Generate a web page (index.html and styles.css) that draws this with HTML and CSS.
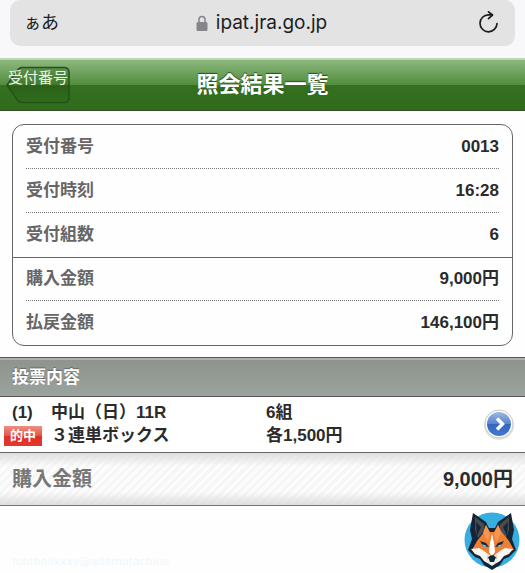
FILE: index.html
```
<!DOCTYPE html>
<html lang="ja">
<head>
    <meta charset="UTF-8">
    <meta name="viewport" content="width=device-width, initial-scale=1.0">
    <title>照会結果一覧</title>
    <link rel="stylesheet" href="styles.css">
</head>
<body>

<div class="browser-bar">
    <div class="address">
        <button type="button" class="text-size"><span class="small">ぁ</span>あ</button>
        <div class="url">
            <svg class="lock" width="12" height="17" viewBox="0 0 12 17" aria-hidden="true">
                <path d="M3 8V4.500a3 3 0 0 1 6 0V8" fill="none" stroke="#85858a" stroke-width="1.500"/>
                <rect x="0.500" y="7" width="11" height="9" rx="1.500" fill="#85858a"/>
            </svg>
            <span>ipat.jra.go.jp</span>
        </div>
        <button type="button" class="reload" aria-label="再読み込み">
            <svg width="20" height="24" viewBox="0 0 20 24" fill="none" stroke="#1c1c1e" stroke-width="1.700" stroke-linecap="round" stroke-linejoin="round">
                <path d="M18 12.500a8.500 8.500 0 1 1-8.500-8.700h3.500"/>
                <path d="M9.500 0.800l4 3.200-4 3.600"/>
            </svg>
        </button>
    </div>
</div>

<header class="header">
    <a href="#" class="back">
        <svg class="back-shape" width="64" height="38" viewBox="0 0 64 38" aria-hidden="true">
            <defs>
                <linearGradient id="backFill" x1="0" y1="0" x2="0" y2="1">
                    <stop offset="0" stop-color="#5b914c"/>
                    <stop offset="0.480" stop-color="#417c2e"/>
                    <stop offset="0.520" stop-color="#2a6119"/>
                    <stop offset="1" stop-color="#2f6d1c"/>
                </linearGradient>
            </defs>
            <path d="M16 1.500h42q5 0 5 5v25q0 5-5 5H16q-3 0-5-3L1 19 11 5q2-3.500 5-3.500z" fill="url(#backFill)" stroke="#28501c" stroke-width="1.500"/>
        </svg>
        <span class="back-text">受付番号</span>
    </a>
    <h1>照会結果一覧</h1>
</header>

<main>
    <dl class="summary">
        <div class="row"><dt>受付番号</dt><dd>0013</dd></div>
        <div class="row"><dt>受付時刻</dt><dd>16:28</dd></div>
        <div class="row"><dt>受付組数</dt><dd>6</dd></div>
        <div class="row divider"><dt>購入金額</dt><dd>9,000円</dd></div>
        <div class="row"><dt>払戻金額</dt><dd>146,100円</dd></div>
    </dl>

    <h2>投票内容</h2>

    <a href="#" class="bet">
        <span class="number">(1)</span>
        <span>中山（日）11R</span>
        <span>6組</span>
        <span class="hit">的中</span>
        <span>３連単ボックス</span>
        <span>各1,500円</span>
        <svg class="arrow" width="32" height="32" viewBox="0 0 32 32" aria-hidden="true">
            <defs>
                <linearGradient id="arrowFill" x1="0" y1="0" x2="0" y2="1">
                    <stop offset="0" stop-color="#9db8e2"/>
                    <stop offset="0.480" stop-color="#5b86d0"/>
                    <stop offset="0.520" stop-color="#3266c2"/>
                    <stop offset="1" stop-color="#4379cf"/>
                </linearGradient>
            </defs>
            <circle cx="16" cy="17" r="15" fill="#e2e1dd"/>
            <circle cx="16" cy="16" r="14" fill="#fff" stroke="#c9c9c7"/>
            <circle cx="16" cy="16" r="12" fill="url(#arrowFill)"/>
            <path d="M14 10.500l5.500 5.500-5.500 5.500" fill="none" stroke="#fff" stroke-width="3.500"/>
        </svg>
    </a>

    <div class="total">
        <span class="total-label">購入金額</span>
        <span>9,000円</span>
    </div>
</main>

<footer>
    <span class="account">footballxxxy@adamotachine</span>
    <svg class="fox" width="56" height="58" viewBox="0 0 56 58" aria-hidden="true">
        <circle cx="28" cy="28" r="27.500" fill="#36aee0"/>
        <!-- head outline -->
        <path d="M9 1l13 9 3 6h6l3-6 13-9 3 17-2 9 4 11-7 7-5 2-4 6-8 5-8-5-4-6-5-2-7-7 4-11-2-9z" fill="#152536"/>
        <!-- ears -->
        <path d="M11 5l9 7 1 6-7 8-3-8zM45 5l-9 7-1 6 7 8 3-8z" fill="#4a4b4e"/>
        <path d="M12 10l5 5-4 9zM44 10l-5 5 4 9z" fill="#152536"/>
        <!-- fur -->
        <path d="M22 13l4 7h4l4-7 3 6 8 10 5 9-6 1-6 6-5 1-4-5-4 5-5-1-6-6-6-1 5-9 8-10z" fill="#ee8035"/>
        <path d="M22 13l4 9-2 8-5-9zM34 13l-4 9 2 8 5-9z" fill="#f6964f"/>
        <path d="M28 22l2 9 1 9-3 5-3-5 1-9z" fill="#fff"/>
        <!-- cheeks -->
        <path d="M7 37l8-1 5 3 4 3-1 5 2 5-5-3-4-5-5-2zM49 37l-8-1-5 3-4 3 1 5-2 5 5-3 4-5 5-2z" fill="#fbf6f1"/>
        <path d="M24 42l4 3 4-3 1 6-2 4-3 2-3-2-2-4z" fill="#eef1f3"/>
        <!-- eyes and nose -->
        <path d="M16 29l6 2 3 4-6-1zM40 29l-6 2-3 4 6-1z" fill="#152536"/>
        <path d="M18 32l5 2-3 1zM38 32l-5 2 3 1z" fill="#6fcbf2"/>
        <path d="M24 45l4-2 4 2-2 5h-4z" fill="#152536"/>
    </svg>
</footer>

</body>
</html>
```
FILE: styles.css
```
*{
    box-sizing: border-box;
}

body{
    margin: 0;
    font-family: "Liberation Sans", "Noto Sans CJK JP", sans-serif;
    font-size: 17px;
    line-height: 24px;
    color: #2b2b2b;
    background-color: #fefefe;
}

a{
    color: inherit;
    text-decoration: none;
}

button{
    border: 0;
    padding: 0;
    background: none;
    font: inherit;
    color: #1c1c1e;
}

.browser-bar{
    padding: 0 10px 12px;
    background-color: #f8f7fa;
}

.address{
    display: grid;
    grid-template-columns: 1fr auto 1fr;
    align-items: center;
    height: 46px;
    padding: 0 16px 0 14px;
    border-radius: 10px;
    background-color: #e3e3e3;
}

.text-size{
    justify-self: start;
    font-size: 18px;
}

.text-size .small{
    font-size: 17px;
}

.url{
    display: flex;
    align-items: center;
    gap: 8px;
    font-family: Inter, sans-serif;
    font-size: 19px;
    color: #1c1c1e;
}

.reload{
    justify-self: end;
    display: flex;
}

.header{
    display: grid;
    grid-template-columns: 1fr auto 1fr;
    align-items: center;
    height: 53px;
    padding: 0 6px;
    border-top: 2px solid #bfd6b3;
    border-bottom: 1px solid #34512a;
    background: linear-gradient(#8db77f, #528e3e 49%, #34701f 50%, #306b1c);
    color: #fff;
}

.back{
    position: relative;
    justify-self: start;
    display: flex;
}

.back-text{
    position: absolute;
    top: 0;
    left: 2px;
    font-size: 15px;
    white-space: nowrap;
    color: #eef5e9;
}

h1{
    margin: 0;
    font-size: 22px;
    text-shadow: 0 -1px 1px #2c4a20;
}

.summary{
    margin: 13px 12px 11px;
    border: 1px solid #666;
    border-radius: 12px;
}

.row{
    display: flex;
    justify-content: space-between;
    align-items: center;
    height: 44px;
    margin: 0 13px;
    border-bottom: 1px dotted #777;
    font-weight: bold;
}

.row:has(+ .divider), .row:last-child{
    border-bottom: 0;
}

.divider{
    position: relative;
}

/* full-width line above the amounts */
.divider::before{
    content: "";
    position: absolute;
    top: 0;
    left: -13px;
    right: -13px;
    border-top: 1px solid #666;
}

dt{
    color: #666;
}

dd{
    margin: 0;
}

h2{
    margin: 0;
    padding: 8px 12px 6px;
    border-top: 1px solid #555;
    border-bottom: 1px solid #555;
    background: linear-gradient(#b0b0b0 2px, #8e948e 2px, #9ba39d);
    color: #fff;
    font-size: 17px;
    text-shadow: 0 -1px 1px #666;
}

.bet{
    display: grid;
    grid-template-columns: 47px 215px 1fr 32px;
    grid-template-rows: 23px 23px;
    align-items: center;
    padding: 4px 10px 5px 4px;
    background-color: #fff;
    font-weight: bold;
}

.number{
    padding-left: 8px;
}

.hit{
    justify-self: start;
    width: 38px;
    background: linear-gradient(#ef8f83, #e2564a 48%, #dd3026 50%, #e2382c);
    color: #fff;
    font-size: 13px;
    line-height: 20px;
    text-align: center;
}

.arrow{
    grid-column: 4;
    grid-row: 1 / 3;
}

.total{
    display: flex;
    justify-content: space-between;
    align-items: center;
    height: 54px;
    padding: 0 12px;
    border-top: 1px solid #666;
    border-bottom: 1px solid #777;
    background:
        linear-gradient(rgba(215,215,215,.8), rgba(255,255,255,0) 25%, rgba(255,255,255,0) 75%, rgba(215,215,215,.8)),
        repeating-linear-gradient(135deg, #fcfcfc 0, #fcfcfc 3px, #f6f6f6 3px, #f6f6f6 6px);
    font-size: 20px;
    font-weight: bold;
}

.total-label{
    color: #777;
}

footer{
    display: flex;
    justify-content: space-between;
    align-items: flex-end;
    padding: 6px 5px 2px 12px;
}

.account{
    font-family: "DejaVu Sans", sans-serif;
    font-size: 11px;
    line-height: 16px;
    color: #f0f7fc;
}
```
